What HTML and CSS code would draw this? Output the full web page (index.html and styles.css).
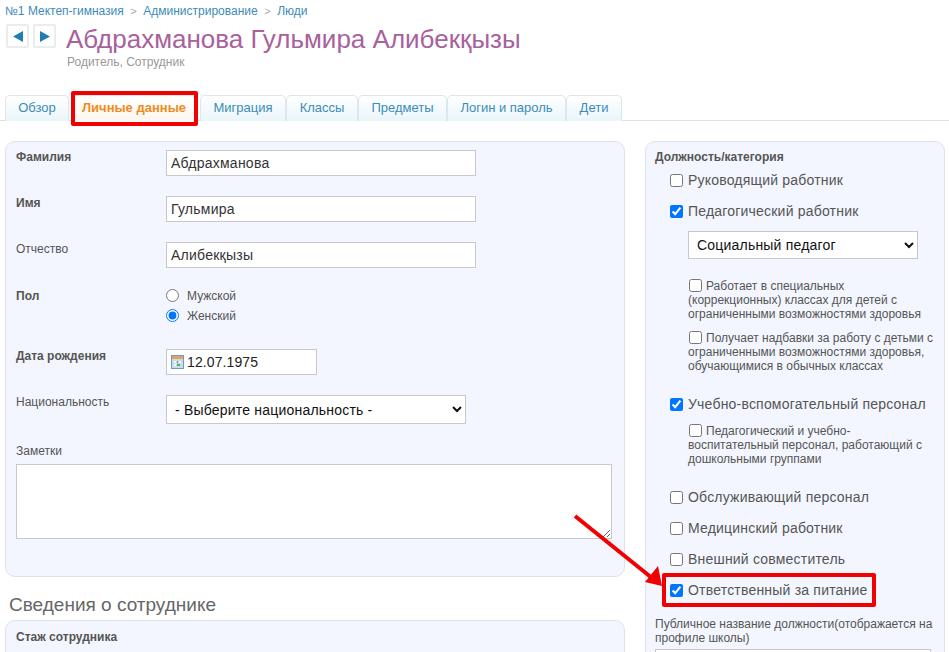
FILE: index.html
```html
<!DOCTYPE html>
<html lang="ru">
<head>
<meta charset="utf-8">
<title>Абдрахманова Гульмира Алибекқызы</title>
<link rel="stylesheet" href="styles.css">
</head>
<body>
<div class="page">
  <nav class="crumbs"><a>№1 Мектеп-гимназия</a><span class="sep">&gt;</span><a>Администрирование</a><span class="sep">&gt;</span><a>Люди</a></nav>
  <header class="head">
    <div class="pager">
      <span class="pg"><svg width="10" height="11" viewBox="0 0 10 11"><path d="M10 0v11L0 5.500z" fill="#1f7db3"/></svg></span>
      <span class="pg"><svg width="10" height="11" viewBox="0 0 10 11"><path d="M0 0v11L10 5.500z" fill="#1f7db3"/></svg></span>
    </div>
    <div class="who">
      <h1>Абдрахманова Гульмира Алибекқызы</h1>
      <p>Родитель, Сотрудник</p>
    </div>
  </header>
  <div class="tabs">
    <a class="tab t1">Обзор</a>
    <a class="tab t2 active">Личные данные</a>
    <a class="tab t3">Миграция</a>
    <a class="tab t4">Классы</a>
    <a class="tab t5">Предметы</a>
    <a class="tab t6">Логин и пароль</a>
    <a class="tab t7">Дети</a>
  </div>
  <div class="cols">
    <div class="left">
      <section class="panel main">
        <div class="row"><label class="lbl b">Фамилия</label><input class="txt w310" value="Абдрахманова"></div>
        <div class="row"><label class="lbl b">Имя</label><input class="txt w310" value="Гульмира"></div>
        <div class="row"><label class="lbl">Отчество</label><input class="txt w310" value="Алибекқызы"></div>
        <div class="row sex"><label class="lbl b">Пол</label>
          <div class="radios">
            <label class="rad"><input type="radio" name="s">Мужской</label>
            <label class="rad"><input type="radio" name="s" checked>Женский</label>
          </div>
        </div>
        <div class="row date"><label class="lbl b">Дата рождения</label>
          <div class="datebox">
            <svg width="13" height="14" viewBox="0 0 13 14"><rect x=".5" y=".5" width="12" height="13" fill="#c9dcf0" stroke="#6f9ac4"/><rect x="1" y="1" width="11" height="3" fill="#e8a060"/><path d="M3 6h2v2H3zM8 6h2v2H8zM3 9h2v2H3z" fill="#f4f8fc"/><path d="M6 6h1v2H6zM6 9h3v2H6z" fill="#6aa84f"/></svg>
            <span>12.07.1975</span>
          </div>
        </div>
        <div class="row nat"><label class="lbl">Национальность</label>
          <select class="sel w300"><option>- Выберите национальность -</option></select>
        </div>
        <label class="lbl notes">Заметки</label>
        <textarea class="area"></textarea>
      </section>
      <h2>Сведения о сотруднике</h2>
      <section class="panel staj"><div class="b ptitle">Стаж сотрудника</div></section>
    </div>
    <aside class="panel right">
      <div class="b ptitle">Должность/категория</div>
      <label class="chk first"><input type="checkbox">Руководящий работник</label>
      <label class="chk"><input type="checkbox" checked>Педагогический работник</label>
      <select class="sel w230"><option>Социальный педагог</option></select>
      <label class="sub s1"><input type="checkbox">Работает в специальных (коррекционных) классах для детей с ограниченными возможностями здоровья</label>
      <label class="sub s2"><input type="checkbox">Получает надбавки за работу с детьми с ограниченными возможностями здоровья, обучающимися в обычных классах</label>
      <label class="chk c3"><input type="checkbox" checked>Учебно-вспомогательный персонал</label>
      <label class="sub s3"><input type="checkbox">Педагогический и учебно-воспитательный персонал, работающий с дошкольными группами</label>
      <label class="chk c4"><input type="checkbox">Обслуживающий персонал</label>
      <label class="chk"><input type="checkbox">Медицинский работник</label>
      <label class="chk"><input type="checkbox">Внешний совместитель</label>
      <label class="chk"><input type="checkbox" checked>Ответственный за питание</label>
      <div class="pub">Публичное название должности(отображается на профиле школы)</div>
      <input class="txt pubinp">
    </aside>
  </div>
  <div class="mark m1"></div>
  <div class="mark m2"></div>
  <svg class="arrow" width="110" height="80" viewBox="0 0 110 80"><path d="M3 3L80 65" stroke="#f00000" stroke-width="4" fill="none"/><path d="M90 73L73 69L86 53z" fill="#f00000"/></svg>
</div>
</body>
</html>
```
FILE: styles.css
```css
html,body{margin:0;padding:0;background:#fff}
body{font-family:"Liberation Sans",Arial,sans-serif;font-size:12px;color:#555}
.page{position:relative;width:949px;height:652px;overflow:hidden}
.crumbs{padding:5px 0 0 5px;height:13px;line-height:13px;color:#3d8cb8;font-size:12px}
.sep{color:#aaa;margin:0 6.500px;font-size:11px}
.head{display:flex;margin-top:6px;height:71px}
.pager{display:flex;gap:4px;padding-left:6px;width:55px;flex:none}
.pg{width:23px;height:24px;box-sizing:border-box;border:2px solid #ececec;border-radius:2px;display:flex;align-items:center;justify-content:center;background:#fff}
.who{margin-left:5px}
h1{margin:0;font-weight:400;font-size:26px;line-height:30px;color:#a9619c;white-space:nowrap}
.who p{margin:1px 0 0 1px;font-size:12px;line-height:14px;color:#999}
.tabs{display:flex;height:25px;padding-left:5px;border-bottom:1px solid #dde3e8}
.tab{box-sizing:border-box;height:26px;border:1px solid #dde6ea;border-bottom:0;border-radius:5px 5px 0 0;background:linear-gradient(#fff,#e9f5fb);color:#3d8cb8;font-size:13px;line-height:23px;text-align:center}
.t1{width:64px;margin-right:3px}
.t2{width:124px;margin-right:4px;background:linear-gradient(#fff,#fdf6ef);color:#ef8b1e;font-weight:700}
.t3{width:86px}.t4{width:72px}.t5{width:89px}.t6{width:119px}.t7{width:56px}
.cols{display:flex;gap:20px;padding:20px 4px 0 5px;align-items:flex-start}
.left{width:620px;flex:none}
.panel{box-sizing:border-box;background:#f3f6fe;border:1px solid #dde3ea;border-radius:10px}
.main{height:436px;padding:8px 10px 0}
.b{font-weight:700}
.row{display:flex;height:46px}
.lbl{display:block;width:150px;flex:none;line-height:14px}
.txt{box-sizing:border-box;height:26px;border:1px solid #c8c8cc;background:#fff;padding:0 4px;font:14px "Liberation Sans",Arial,sans-serif;letter-spacing:.25px;color:#333;margin:0;outline:0}
.w310{width:310px}
.sex{height:61px}
.sex .lbl{padding-top:1px}
.radios{display:flex;flex-direction:column;gap:7px;padding-top:1px}
.rad{display:flex;align-items:center;height:13px;color:#555}
.rad input{margin:0 8px 0 0;width:13px;height:13px}
.date{height:46px}
.datebox{box-sizing:border-box;width:151px;height:26px;border:1px solid #c8c8cc;background:#fff;display:flex;align-items:center;padding-left:4px;gap:3px;font-size:14px;letter-spacing:.1px;color:#222}
.nat{height:48px}
.sel{box-sizing:border-box;height:29px;border:1px solid #c8c8cc;background:#fff;font:14px "Liberation Sans",Arial,sans-serif;letter-spacing:.2px;color:#111;border-radius:0;padding:0 4px;margin:0}
.w300{width:300px}
.w230{width:230px;height:28px;display:block;margin:-3px 0 20px 33px}
.notes{width:auto;margin:1px 0 6px}
.area{display:block;box-sizing:border-box;width:596px;height:75px;border:1px solid #c8c8cc;background:#fff;margin:0}
h2{margin:18px 0 0 4px;font-size:19px;font-weight:400;line-height:20px;color:#666}
.staj{height:80px;margin-top:5px;padding:9px 10px}
.ptitle{line-height:14px;color:#555}
.right{width:300px;height:600px;flex:none;padding:8px 9px 0}
.chk{display:flex;align-items:center;height:16px;margin:0 0 15px 15px;font-size:14px;letter-spacing:.2px;color:#555;white-space:nowrap}
.chk.first{margin-top:8px}
.chk input{margin:0 5px 0 0;width:13px;height:13px}
.sub{display:block;width:248px;margin-left:33px;font-size:12px;line-height:14px;color:#555}
.sub input{margin:0 4px 0 1px;width:13px;height:13px;vertical-align:-2px}
.s1{margin-bottom:10px}
.s2{margin-bottom:23px}
.c3{margin-bottom:12px}
.s3{margin-bottom:23px}
.pub{margin-top:19px;line-height:14px;color:#555;width:285px}
.pubinp{display:block;width:276px;margin-top:4px}
.mark{position:absolute;box-sizing:border-box;border:4px solid #f00000;border-radius:2px}
.m1{left:71px;top:91px;width:127px;height:35px}
.m2{left:662px;top:573px;width:214px;height:34px}
.arrow{position:absolute;left:572px;top:513px}
```
